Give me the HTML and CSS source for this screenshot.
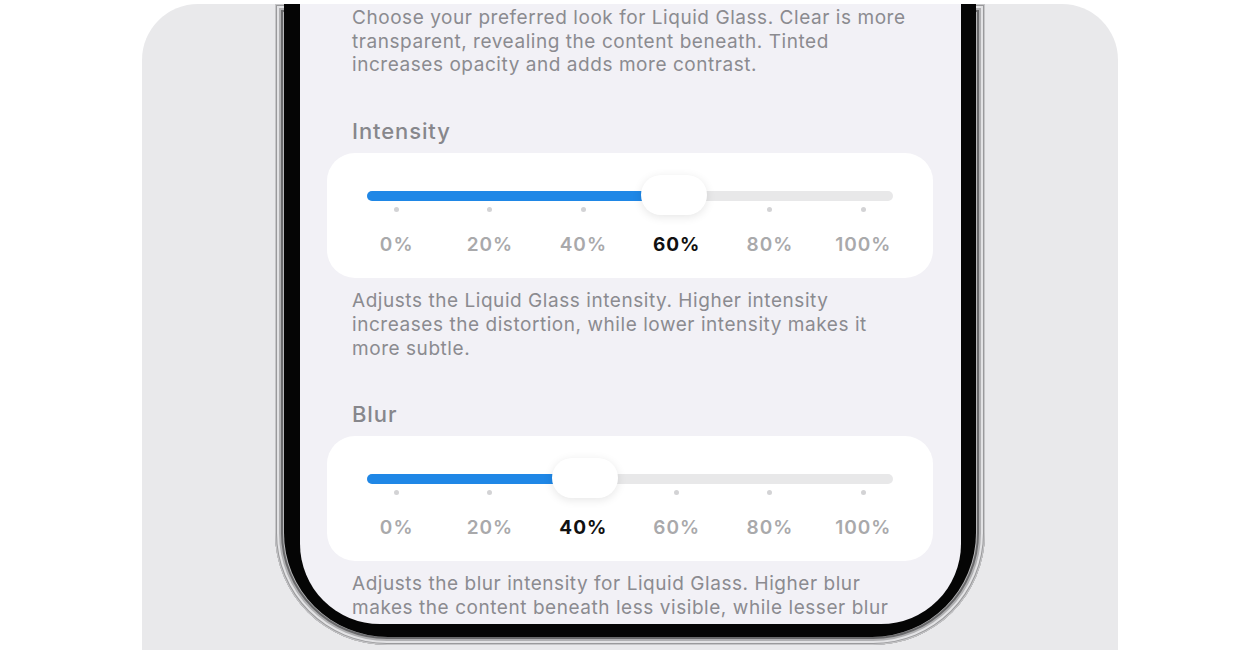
FILE: index.html
```html
<!DOCTYPE html>
<html lang="en">

<head>
    <meta charset="UTF-8">
    <meta name="viewport" content="width=device-width, initial-scale=1.0">
    <title>Liquid Glass</title>
    <link rel="stylesheet" href="styles.css">
</head>

<body>
    <div class="stage">
        <div class="phone">
            <div class="bezel">
                <div class="screen">
                    <p class="note">Choose your preferred look for Liquid Glass. Clear is more transparent, revealing the content beneath. Tinted increases opacity and adds more contrast.</p>

                    <h2 class="section-title">Intensity</h2>
                    <div class="slider-card">
                        <div class="track">
                            <div class="fill" style="width: 290px"></div>
                            <div class="thumb" style="left: 274px"></div>
                        </div>
                        <div class="ticks">
                            <span></span><span></span><span></span><span></span><span></span><span></span>
                        </div>
                        <div class="labels">
                            <span>0%</span><span>20%</span><span>40%</span><span class="active">60%</span><span>80%</span><span>100%</span>
                        </div>
                    </div>
                    <p class="note hint">Adjusts the Liquid Glass intensity. Higher intensity increases the distortion, while lower intensity makes it more subtle.</p>

                    <h2 class="section-title">Blur</h2>
                    <div class="slider-card">
                        <div class="track">
                            <div class="fill" style="width: 200px"></div>
                            <div class="thumb" style="left: 185px"></div>
                        </div>
                        <div class="ticks">
                            <span></span><span></span><span></span><span></span><span></span><span></span>
                        </div>
                        <div class="labels">
                            <span>0%</span><span>20%</span><span class="active">40%</span><span>60%</span><span>80%</span><span>100%</span>
                        </div>
                    </div>
                    <p class="note hint">Adjusts the blur intensity for Liquid Glass. Higher blur makes the content beneath less visible, while lesser blur</p>
                </div>
            </div>
        </div>
    </div>
</body>

</html>
```

FILE: styles.css
```css
* {
    box-sizing: border-box;
}

body {
    margin: 0;
    background: #ffffff;
    font-family: "Inter", "Liberation Sans", sans-serif;
}

.stage {
    width: 976px;
    height: 646px;
    margin: 4px 0 0 142px;
    background: #e9e9eb;
    border-radius: 56px 56px 0 0;
    overflow: hidden;
    display: flex;
    justify-content: center;
}

/* silver outer rim */
.phone {
    width: 710px;
    height: 641px;
    padding: 0 9px 8px 9px;
    background: #b8b8ba;
    border-radius: 0 0 112px 112px;
    box-shadow: inset 0 0 0 1px #c6c6c8, inset 0 0 0 2px #9a9a9c, inset 0 0 0 4px #e2e2e4, inset 0 0 0 6px #b0b0b2, inset 0 0 0 8px #6a6a6c;
}

.bezel {
    height: 100%;
    padding: 0 15px 13px 16px;
    background: #050505;
    border-radius: 0 0 104px 104px;
}

.screen {
    height: 100%;
    padding: 2px 28px 0 27px;
    background: #f2f1f6;
    border-radius: 0 0 80px 80px;
    overflow: hidden;
}

.note {
    max-width: 560px;
    margin: 0 0 0 25px;
    font-size: 19px;
    line-height: 23.5px;
    letter-spacing: 0.55px;
    color: #8b8b90;
}

.note.hint {
    line-height: 24px;
}

.section-title {
    margin: 40px 0 8px 25px;
    font-size: 22px;
    line-height: 28px;
    font-weight: 500;
    letter-spacing: 0.9px;
    color: #87878c;
}

.hint + .section-title {
    margin-top: 39px;
}

.slider-card {
    height: 125px;
    margin-bottom: 11px;
    padding: 38px 23px 0 23px;
    background: #ffffff;
    border-radius: 28px;
}

.track {
    position: relative;
    height: 10px;
    margin: 0 17px;
    background: #e8e8e9;
    border-radius: 5px;
}

.fill {
    height: 100%;
    background: #1f87e6;
    border-radius: 5px;
}

.thumb {
    position: absolute;
    top: -16px;
    width: 66px;
    height: 40px;
    background: #ffffff;
    border-radius: 20px;
    box-shadow: 0 2px 10px rgba(0, 0, 0, 0.1);
    z-index: 1;
}

.ticks,
.labels {
    display: grid;
    grid-template-columns: repeat(6, 1fr);
    justify-items: center;
}

.ticks {
    margin-top: 6px;
}

.ticks span {
    width: 5px;
    height: 5px;
    border-radius: 50%;
    background: #d3d3d5;
}

.labels {
    margin-top: 21px;
    font-size: 19px;
    line-height: 24px;
    font-weight: 600;
    letter-spacing: 1px;
    color: #a9a9ab;
}

.labels .active {
    color: #111111;
    font-weight: 700;
}
```
